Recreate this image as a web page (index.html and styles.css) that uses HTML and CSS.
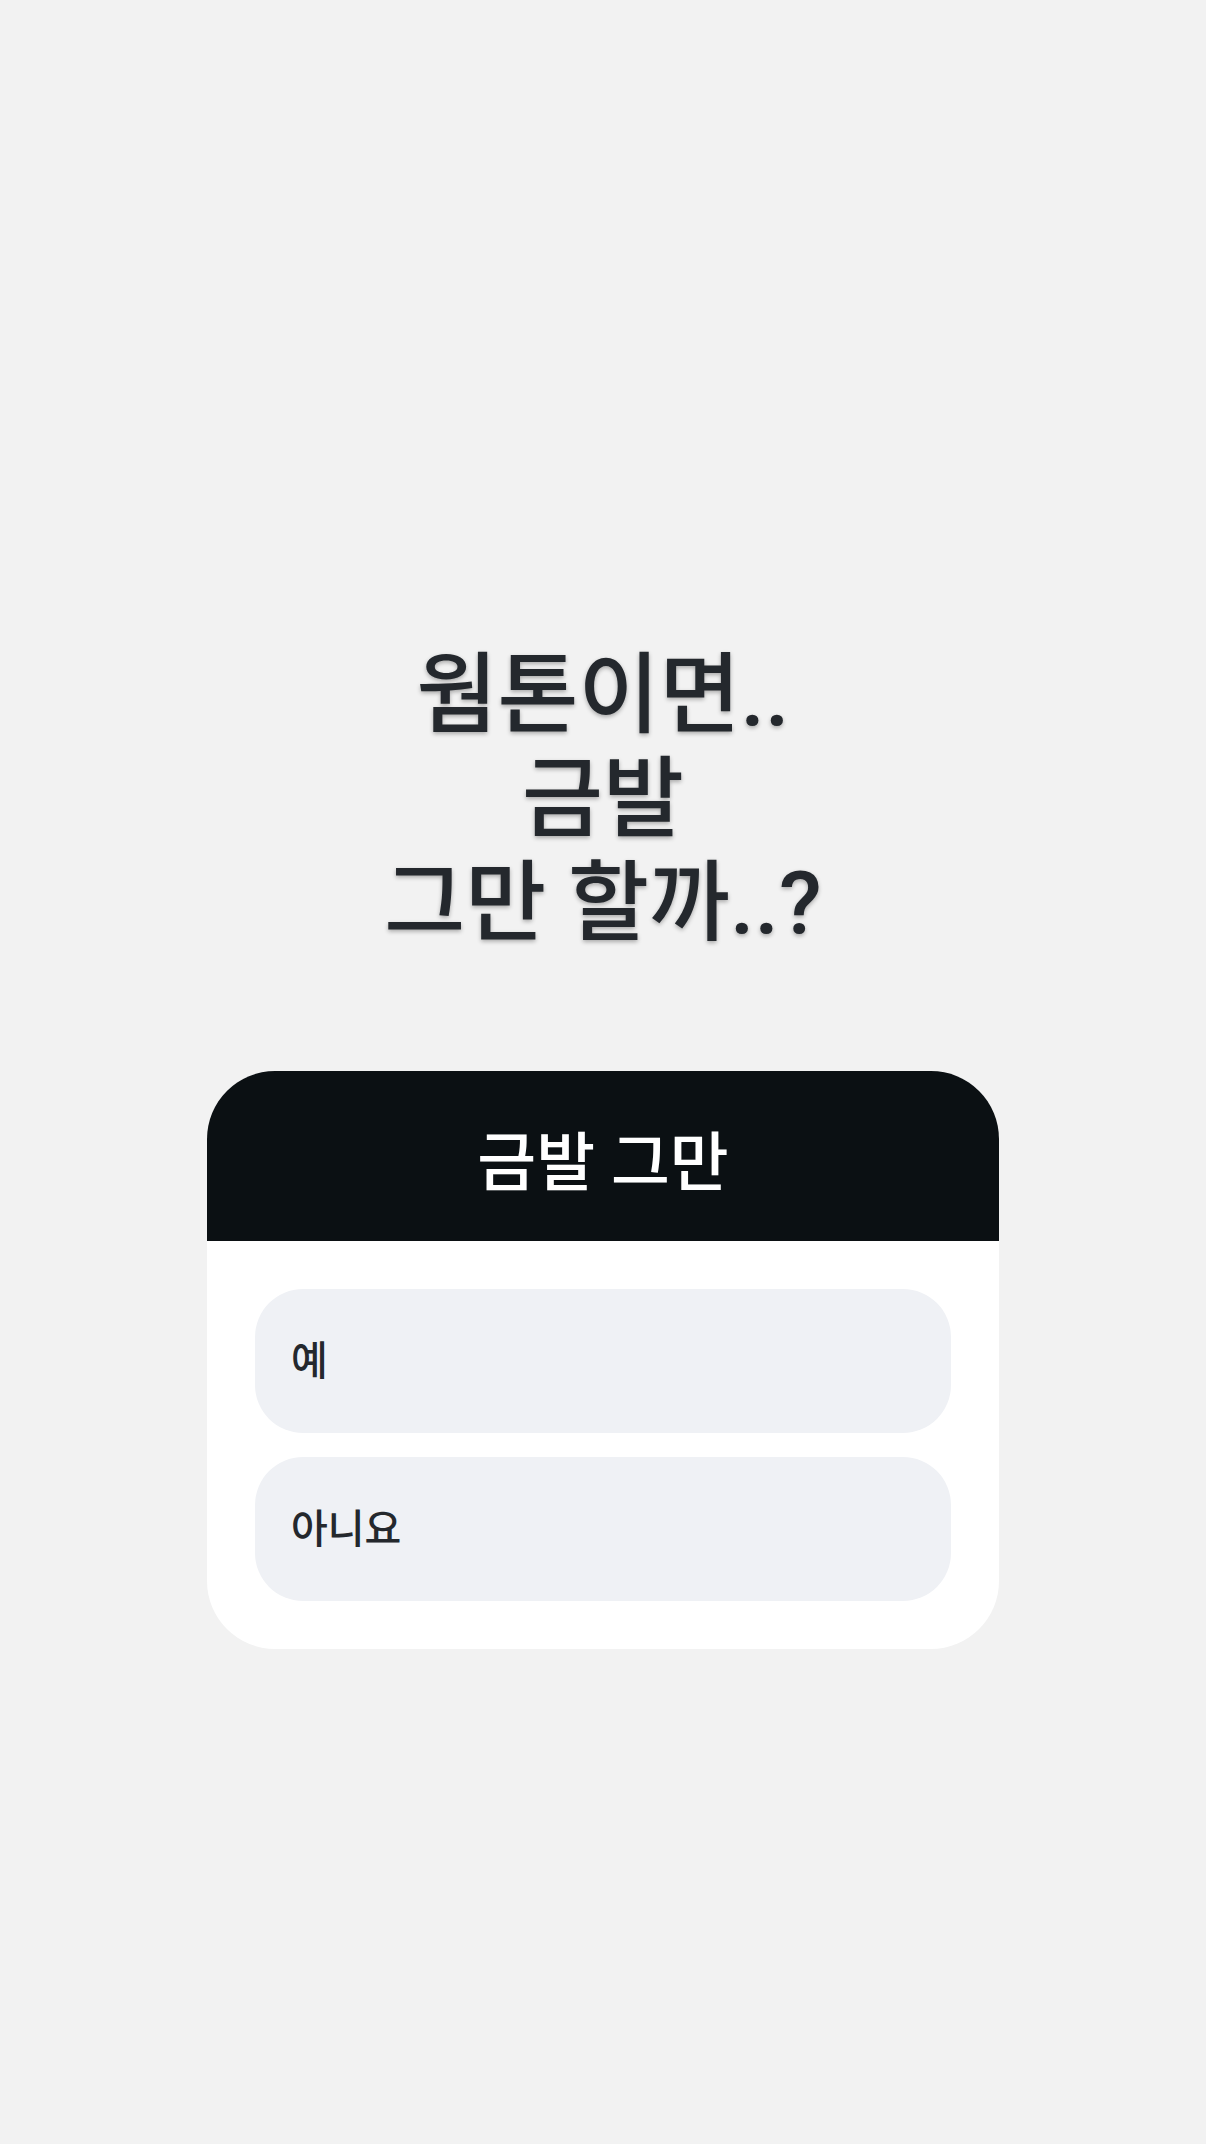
FILE: index.html
```html
<!DOCTYPE html>
<html lang="ko">
<head>
  <meta charset="UTF-8">
  <meta name="viewport" content="width=device-width, initial-scale=1.0">
  <title>금발 그만</title>
  <link rel="stylesheet" href="styles.css">
</head>
<body>
  <main class="story">
    <h1 class="question">웜톤이면..<br>금발<br>그만 할까..?</h1>

    <section class="poll" aria-labelledby="poll-title">
      <h2 class="poll-title" id="poll-title">금발 그만</h2>
      <div class="poll-options">
        <button type="button" class="poll-option">예</button>
        <button type="button" class="poll-option">아니요</button>
      </div>
    </section>
  </main>
</body>
</html>
```
FILE: styles.css
```css
:root {
  --bg: #f2f2f2;
  --dark: #0b1013;
  --text: #24282d;
  --option: #eff1f5;
}

* {
  box-sizing: border-box;
  margin: 0;
  padding: 0;
}

body {
  font-family: Roboto, "Noto Sans CJK KR", sans-serif;
  color: var(--text);
  background: var(--bg);
}

.story {
  display: flex;
  flex-direction: column;
  align-items: center;
  justify-content: center;
  gap: 116px;
  min-height: 100vh;
  padding: 172px 24px 24px;
}

.question {
  font-size: 88px;
  font-weight: 500;
  line-height: 104px;
  text-align: center;
  text-shadow: 0 2px 4px rgba(0, 0, 0, 0.3);
}

.poll {
  width: 100%;
  max-width: 792px;
  background: white;
  border-radius: 68px;
  overflow: hidden;
}

.poll-title {
  padding: 48px 40px 32px;
  font-size: 64px;
  font-weight: 500;
  line-height: 90px;
  text-align: center;
  color: white;
  background: var(--dark);
}

.poll-options {
  display: flex;
  flex-direction: column;
  gap: 24px;
  padding: 48px;
}

.poll-option {
  height: 144px;
  padding: 0 36px 6px;
  border: none;
  border-radius: 48px;
  font-family: inherit;
  font-size: 40px;
  font-weight: 500;
  text-align: left;
  color: var(--text);
  background: var(--option);
  cursor: pointer;
}
```
